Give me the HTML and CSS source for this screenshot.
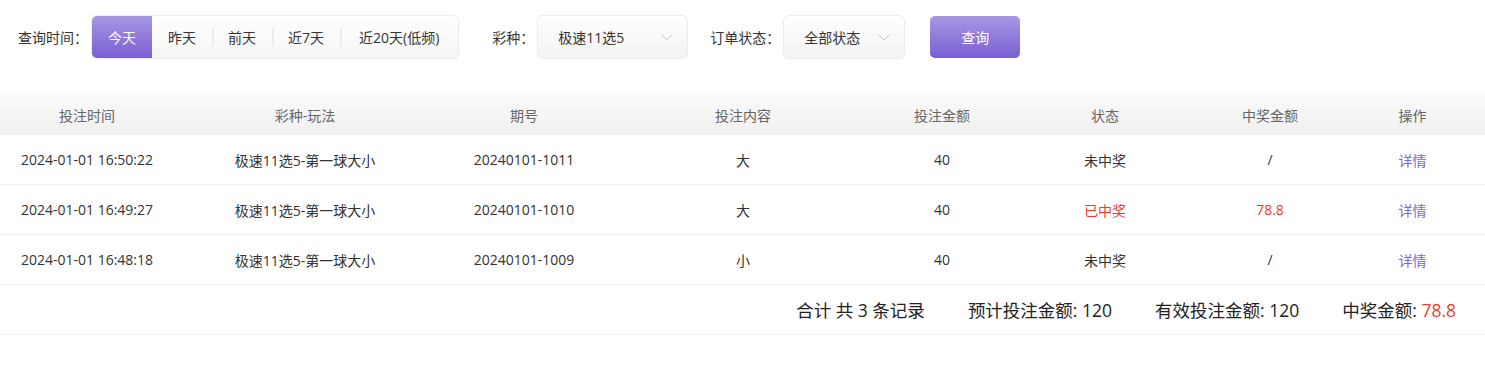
FILE: index.html
```html
<!DOCTYPE html>
<html lang="zh-CN">
<head>
    <meta charset="UTF-8">
    <meta name="viewport" content="width=device-width, initial-scale=1.0">
    <title>投注记录</title>
    <link rel="stylesheet" href="styles.css">
</head>
<body>
    <!-- Filter Bar -->
    <div class="filter-bar">
        <span class="filter-label">查询时间：</span>
        <div class="day-group">
            <span class="day-item active">今天</span>
            <span class="day-item">昨天</span>
            <span class="day-item divided">前天</span>
            <span class="day-item divided">近7天</span>
            <span class="day-item divided wide">近20天(低频)</span>
        </div>

        <span class="filter-label lottery-label">彩种：</span>
        <div class="select lottery-select">
            <span>极速11选5</span>
            <svg class="arrow" width="12" height="7" viewBox="0 0 12 7"><path d="M0.5 0.5 L6 6 L11.5 0.5" fill="none" stroke="#c8c8cc" stroke-width="1"/></svg>
        </div>

        <span class="filter-label status-label">订单状态：</span>
        <div class="select status-select">
            <span>全部状态</span>
            <svg class="arrow" width="12" height="7" viewBox="0 0 12 7"><path d="M0.5 0.5 L6 6 L11.5 0.5" fill="none" stroke="#c8c8cc" stroke-width="1"/></svg>
        </div>

        <button class="search-btn">查询</button>
    </div>

    <!-- Records Table -->
    <div class="records">
        <div class="row head">
            <div>投注时间</div>
            <div>彩种-玩法</div>
            <div>期号</div>
            <div>投注内容</div>
            <div>投注金额</div>
            <div>状态</div>
            <div>中奖金额</div>
            <div>操作</div>
        </div>
        <div class="row">
            <div>2024-01-01 16:50:22</div>
            <div>极速11选5-第一球大小</div>
            <div>20240101-1011</div>
            <div>大</div>
            <div>40</div>
            <div>未中奖</div>
            <div>/</div>
            <div><a href="#" class="detail">详情</a></div>
        </div>
        <div class="row">
            <div>2024-01-01 16:49:27</div>
            <div>极速11选5-第一球大小</div>
            <div>20240101-1010</div>
            <div>大</div>
            <div>40</div>
            <div class="red">已中奖</div>
            <div class="red">78.8</div>
            <div><a href="#" class="detail">详情</a></div>
        </div>
        <div class="row">
            <div>2024-01-01 16:48:18</div>
            <div>极速11选5-第一球大小</div>
            <div>20240101-1009</div>
            <div>小</div>
            <div>40</div>
            <div>未中奖</div>
            <div>/</div>
            <div><a href="#" class="detail">详情</a></div>
        </div>
        <div class="summary">
            <span>合计 共 3 条记录</span>
            <span>预计投注金额: 120</span>
            <span>有效投注金额: 120</span>
            <span>中奖金额: <em class="red">78.8</em></span>
        </div>
    </div>
</body>
</html>
```

FILE: styles.css
```css
body {
    margin: 0;
    font-family: "Open Sans", "Noto Sans CJK SC", sans-serif;
    color: #333;
    background: #fff;
}
.filter-bar {
    display: flex;
    align-items: center;
    height: 42px;
    padding: 16px 0 0 18px;
    font-size: 14px;
}
.filter-label {
    color: #333;
    margin-right: 4px;
}
.lottery-label {
    margin-left: 34px;
}
.status-label {
    margin-left: 23px;
}
.day-group {
    display: flex;
    align-items: center;
    height: 42px;
    border-radius: 5px;
    background: linear-gradient(#fff, #f5f5f5);
    box-shadow: 0 0 0 1px #ececec, 0 1px 3px rgba(0, 0, 0, 0.06);
    overflow: hidden;
}
.day-item {
    position: relative;
    display: flex;
    align-items: center;
    height: 100%;
    padding: 0 16px;
    color: #333;
}
.day-item.wide {
    padding: 0 19px;
}
.day-item.divided::before {
    content: "";
    position: absolute;
    left: 0;
    top: 12px;
    bottom: 12px;
    width: 2px;
    background: #ebebeb;
}
.day-item.active {
    color: #fff;
    background: linear-gradient(#a797e2, #7a5ed2);
}
.select {
    display: flex;
    align-items: center;
    justify-content: space-between;
    box-sizing: border-box;
    height: 42px;
    padding: 0 14px 0 20px;
    border-radius: 5px;
    background: linear-gradient(#fff, #f3f3f3);
    box-shadow: 0 0 0 1px #ececec, 0 1px 3px rgba(0, 0, 0, 0.06);
}
.lottery-select {
    width: 149px;
}
.status-select {
    width: 120px;
}
.search-btn {
    margin-left: 26px;
    width: 90px;
    height: 42px;
    border: none;
    border-radius: 5px;
    color: #fff;
    font-family: inherit;
    font-size: 14px;
    background: linear-gradient(#a898e3, #7a5ed2);
    cursor: pointer;
}
.records {
    margin-top: 37px;
    font-size: 14px;
}
.row {
    display: grid;
    grid-template-columns: 174px 262px 176px 262px 136px 190px 140px 145px;
    height: 50px;
    align-items: center;
    text-align: center;
    border-bottom: 1px solid #efeff2;
    box-sizing: border-box;
}
.row.head {
    height: 40px;
    color: #666;
    border-bottom: none;
    background: linear-gradient(#fafafa, #f0f0f0);
}
.red {
    color: #ee3b2e;
    font-style: normal;
}
.detail {
    color: #8067d6;
    text-decoration: none;
}
.summary {
    display: flex;
    justify-content: flex-end;
    align-items: center;
    gap: 43px;
    height: 50px;
    padding-right: 29px;
    font-size: 17.5px;
    color: #222;
    border-bottom: 1px solid #efeff2;
    box-sizing: border-box;
}
```
